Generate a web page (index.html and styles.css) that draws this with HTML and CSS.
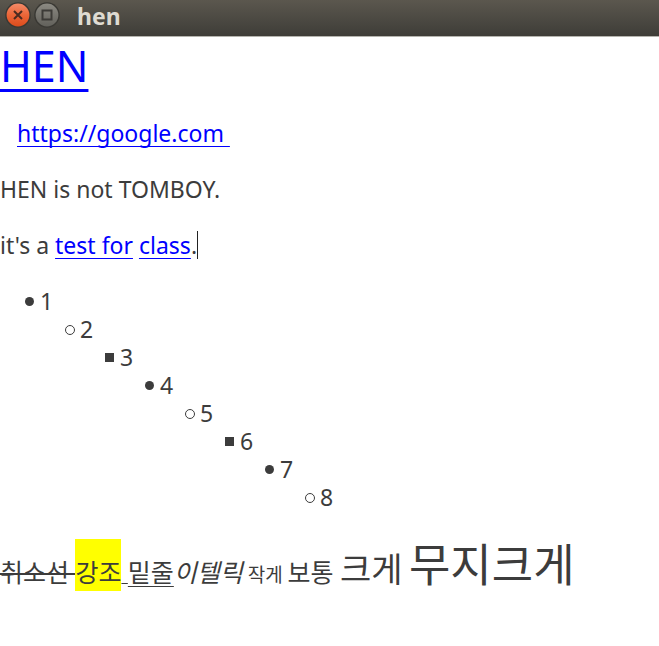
FILE: index.html
```html
<!DOCTYPE html>
<html lang="ko">
<head>
<meta charset="utf-8">
<title>hen</title>
<link rel="stylesheet" href="styles.css">
</head>
<body>
<header class="titlebar">
  <button class="win-button close" type="button" aria-label="Close">
    <svg viewBox="0 0 26 26"><defs><linearGradient id="orange" x1="0" y1="0" x2="0" y2="1"><stop offset="0" stop-color="#f58a68"/><stop offset=".5" stop-color="#eb6638"/><stop offset="1" stop-color="#dd4c1c"/></linearGradient></defs><circle class="rim" cx="13" cy="13" r="12.8"/><circle cx="13" cy="13" r="11.4" fill="url(#orange)"/><path d="M9 9l8 8M17 9l-8 8"/></svg>
  </button>
  <button class="win-button maximize" type="button" aria-label="Maximize">
    <svg viewBox="0 0 26 26"><defs><linearGradient id="grey" x1="0" y1="0" x2="0" y2="1"><stop offset="0" stop-color="#8b8982"/><stop offset="1" stop-color="#62615b"/></linearGradient></defs><circle class="rim" cx="13" cy="13" r="12.8"/><circle cx="13" cy="13" r="11.4" fill="url(#grey)"/><path d="M8.5 8.5h9v9h-9z"/></svg>
  </button>
  <span class="window-title">hen</span>
</header>
<main class="note">
  <h1><a href="#hen">HEN</a></h1>
  <p class="indented"><a href="https://google.com">https://google.com </a></p>
  <p>HEN is not TOMBOY.</p>
  <p>it's a <a href="#test-for">test for</a> <a href="#class">class</a>.<span class="caret"></span></p>
  <ul class="disc"><li>1
    <ul class="circle"><li>2
      <ul class="square"><li>3
        <ul class="disc"><li>4
          <ul class="circle"><li>5
            <ul class="square"><li>6
              <ul class="disc"><li>7
                <ul class="circle"><li>8</li></ul>
              </li></ul>
            </li></ul>
          </li></ul>
        </li></ul>
      </li></ul>
    </li></ul>
  </li></ul>
  <p class="samples"><s>취소선 </s><mark>강조</mark><u class="gap"> </u><u>밑줄</u><em>이텔릭</em><small> 작게 </small>보통 <span class="large">크게</span> <span class="huge">무지크게</span></p>
</main>
</body>
</html>
```
FILE: styles.css
```css
*,
*::before { box-sizing: border-box; }

body {
  margin: 0;
  background: #fff;
  color: #3c3c3c;
  font: 23px/28px "Noto Sans", "Noto Sans CJK KR", sans-serif;
}

.titlebar {
  display: flex;
  align-items: center;
  height: 37px;
  padding: 0 5px 5px;
  border-bottom: 1px solid #b5b4ae;
  background: linear-gradient(#5b574e, #3e3d38);
}

.win-button {
  width: 26px;
  height: 26px;
  margin: 0 3px 2px 0;
  padding: 0;
  border: 0;
  background: none;
}

.win-button svg { display: block; }
.win-button path { fill: none; stroke: #3c3b37; stroke-width: 2; }
.rim { fill: #393833; }
.close path { stroke: #4b2a20; }

.window-title {
  margin-left: 14px;
  color: #dfdbd2;
  font-size: 23px;
  font-weight: 700;
}

.note h1,
.note p { margin: 0 0 28px; }

.note h1 {
  padding-top: 4px;
  font-size: 43px;
  font-weight: 400;
  line-height: 50px;
}

.note a {
  color: #00f;
  text-decoration: underline 1px #00f;
  text-decoration-skip-ink: none;
  text-underline-offset: 4px;
  white-space: pre;
}

.note h1 a {
  text-decoration-thickness: 3px;
  text-underline-offset: 7px;
}

.note .indented { padding-left: 17px; }

.caret {
  display: inline-block;
  width: 1px;
  height: 28px;
  background: #222;
  vertical-align: top;
}

.note ul {
  margin: 0;
  padding-left: 40px;
  list-style: none;
}

.note > ul { margin-bottom: 28px; }

.note li::before {
  content: "";
  display: inline-block;
  width: 9px;
  height: 9px;
  margin: 0 6px 0 -15px;
  vertical-align: 4px;
}

.note .disc > li::before { border-radius: 50%; background: #3c3c3c; }
.note .circle > li::before {
  width: 10px;
  height: 10px;
  margin-right: 5px;
  vertical-align: 3px;
  border: 1px solid #3c3c3c;
  border-radius: 50%;
  background: #fff;
}
.note .square > li::before { border-radius: 0; background: #3c3c3c; }

.note .samples {
  font-family: Lato, "Noto Sans CJK KR", sans-serif;
  font-size: 25px;
  line-height: 52px;
}

.samples s { text-decoration-thickness: 2px; }
.samples mark {
  padding: 18px 0 4px;
  background: #ff0;
  color: inherit;
}
.samples u {
  text-decoration-thickness: 1px;
  text-decoration-skip-ink: none;
  text-underline-offset: 4px;
}
.samples .gap { text-underline-offset: 1px; }
.samples small { font-size: 19px; }
.samples .large { font-size: 34px; }
.samples .huge { font-size: 45px; }
```
